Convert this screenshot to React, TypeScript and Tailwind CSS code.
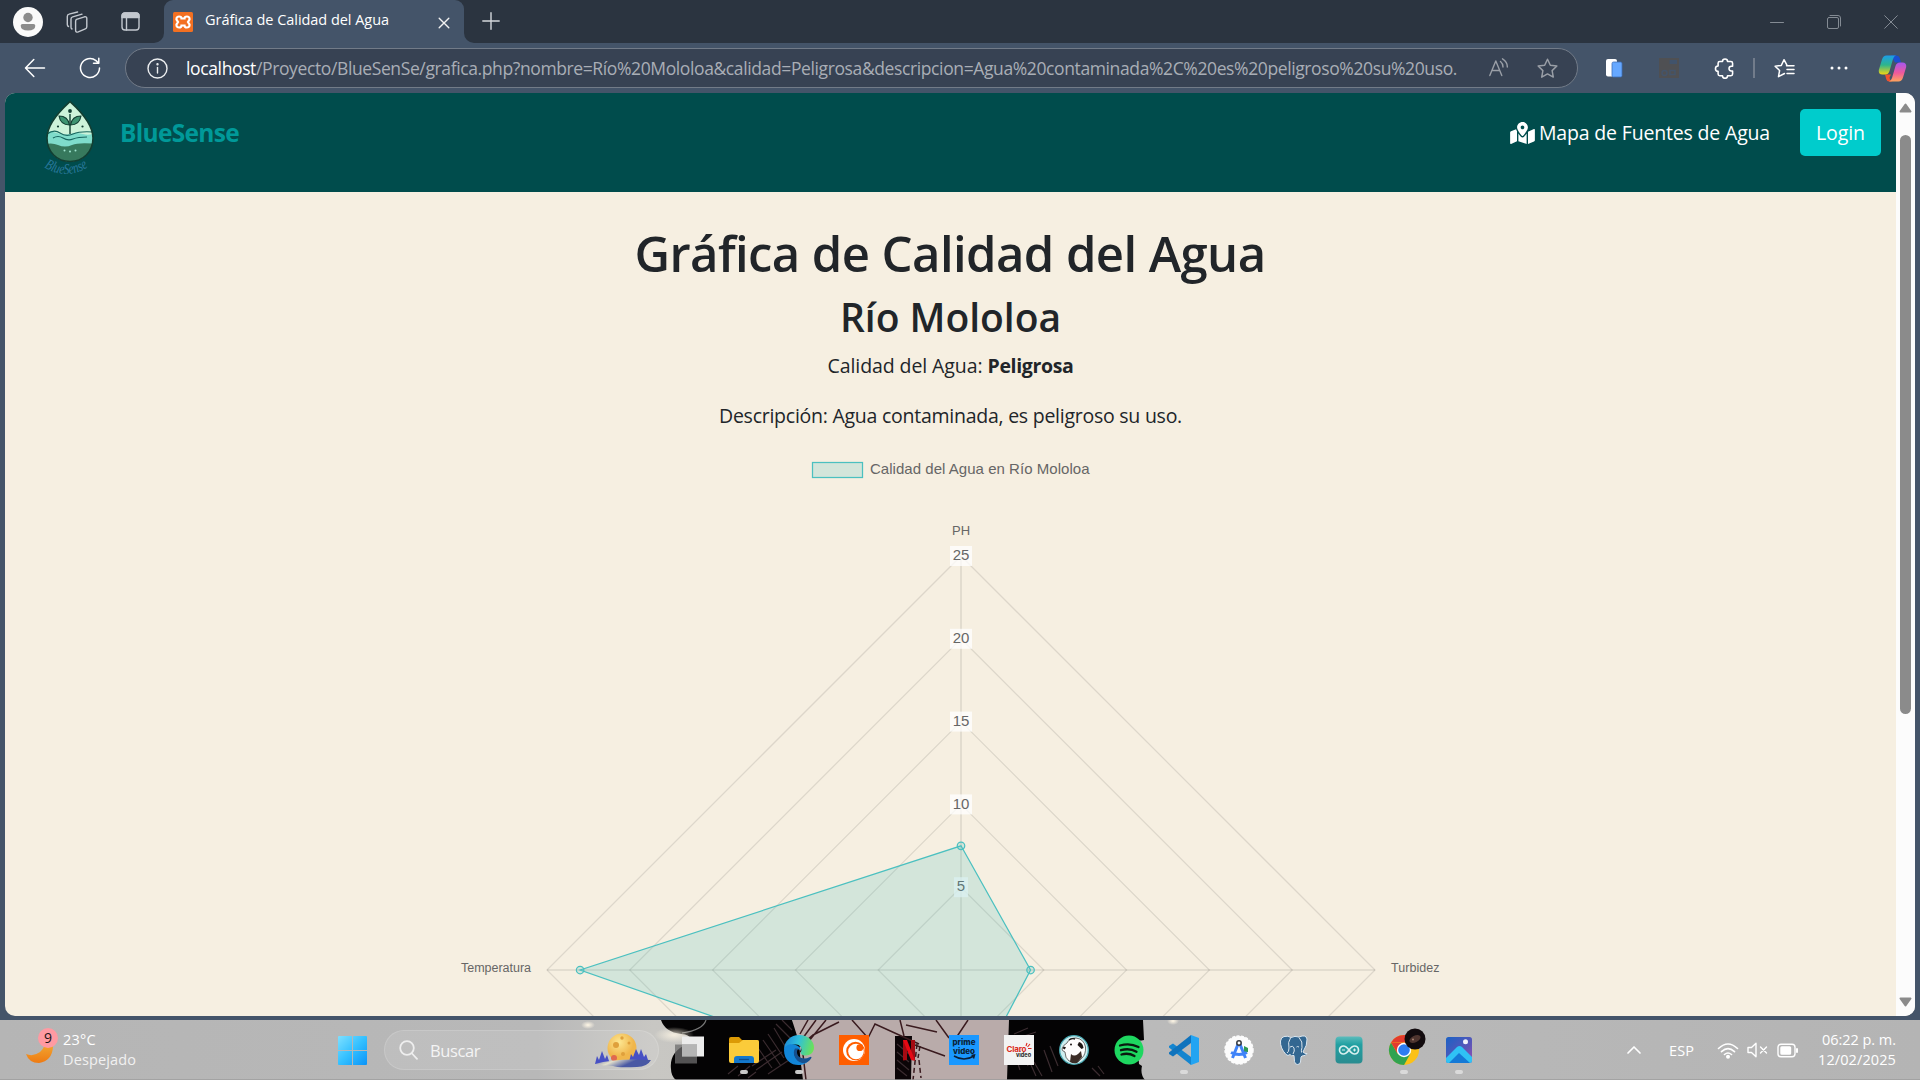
import { useLayoutEffect, useRef, useState, type ReactNode } from 'react';
import { FaMapMarkedAlt } from 'react-icons/fa';

/** Text whose tracking is adjusted so that it spans exactly `w` pixels. */
function Fit({ w, className = '', children }: { w: number; className?: string; children: string }) {
  const ref = useRef<HTMLSpanElement>(null);
  const [ls, setLs] = useState(0);
  useLayoutEffect(() => {
    const el = ref.current;
    if (el) setLs((w - el.getBoundingClientRect().width) / children.length);
  }, [w, children]);
  return (
    <span ref={ref} className={`inline-block whitespace-pre ${className}`} style={{ letterSpacing: `${ls}px` }}>
      {children}
    </span>
  );
}

const line = { fill: 'none', strokeLinecap: 'round', strokeLinejoin: 'round' } as const;

function TabStrip() {
  return (
    <div className="flex h-[43px] items-center bg-[#2b3440] text-[#c3c8cf]">
      <svg className="ml-[13px] size-[30px]" viewBox="0 0 30 30">
        <circle cx="15" cy="15" r="15" fill="#fafafa" />
        <circle cx="15" cy="10.500" r="4.700" fill="#8c8c8c" />
        <path d="M9.500 17h11q1.800 0 1.800 1.800 0 4.700-7.300 4.700t-7.300-4.700Q7.700 17 9.500 17z" fill="#8c8c8c" />
      </svg>
      <svg className="ml-[23px] size-[22px]" viewBox="0 0 22 22" stroke="currentColor" strokeWidth="1.4" {...line}>
        <path d="M10.500 8.300 18.500 5.800q2.300-.5 2.300 1.700v8.300q0 1.500-1.500 2.100l-7 3q-2.700.8-2.700-1.700v-8.800q0-1.600.9-2.100z" />
        <path d="M6 18q-1-.5-1-1.700V8q0-1.700 1.700-2.200l9.300-2.700" />
        <path d="M2.500 15.500q-1.200-.5-1.200-2V5.500q0-2 1.800-2.400l8.500-2.100" />
      </svg>
      <svg className="ml-[33px] size-[19px]" viewBox="0 0 19 19" stroke="currentColor" strokeWidth="1.4" {...line}>
        <rect x="1" y="1" width="17" height="17" rx="3" />
        <path d="M1 5.500V4a3 3 0 0 1 3-3h11a3 3 0 0 1 3 3v1.500z" fill="currentColor" />
        <path d="M5.500 6v12" />
      </svg>
      <div className="ml-[14px] h-full w-[10px] bg-[#445469]">
        <div className="h-full w-full rounded-br-[10px] bg-[#2b3440]" />
      </div>
      <div className="flex h-full w-[300px] items-center rounded-t-[9px] bg-[#445469]">
        <svg className="ml-[9px] size-5" viewBox="0 0 20 20">
          <rect width="20" height="20" rx="1.500" fill="#f37021" />
          <path
            d="M6 4.500c-2.500 0-3.200 2.500-2 4l1 1.500-1 1.500c-1.200 1.500-.5 4 2 4 1.500 0 2.500-1 2.500-2h3c0 1 1 2 2.500 2 2.500 0 3.200-2.500 2-4L15 10l1-1.500c1.200-1.500.5-4-2-4-1.500 0-2.500 1-2.500 2h-3c0-1-1-2-2.500-2z"
            fill="none"
            stroke="#fff"
            strokeWidth="2.200"
          />
        </svg>
        <div className="mb-[3px] ml-[12px] w-[184px] text-[14.5px] text-white">
          <Fit w={184}>Gráfica de Calidad del Agua</Fit>
        </div>
        <svg className="ml-[49px] mt-0.5 size-3" viewBox="0 0 12 12" stroke="#f2f2f2" strokeWidth="1.400" {...line}>
          <path d="M1.200 1.200l9.600 9.600M10.800 1.200l-9.600 9.600" />
        </svg>
      </div>
      <div className="h-full w-[10px] bg-[#445469]">
        <div className="h-full w-full rounded-bl-[10px] bg-[#2b3440]" />
      </div>
      <svg className="mb-px ml-[8px] size-[18px]" viewBox="0 0 18 18" stroke="#d5d8dc" strokeWidth="1.400" {...line}>
        <path d="M9 .8v16.400M.8 9h16.400" />
      </svg>
      <div className="ml-auto mr-[22px] flex items-center gap-[43px]">
        <svg className="size-[14px]" viewBox="0 0 14 14" stroke="#848b94" {...line}>
          <path d="M.5 7.500h13" />
        </svg>
        <svg className="size-[14px]" viewBox="0 0 14 14" stroke="#848b94" {...line}>
          <rect x=".5" y="2.500" width="11" height="11" rx="1.500" />
          <path d="M3 .5h8a2.500 2.500 0 0 1 2.500 2.500v8" />
        </svg>
        <svg className="size-[14px]" viewBox="0 0 14 14" stroke="#848b94" {...line}>
          <path d="M.7.700l12.600 12.600M13.300.700.7 13.300" />
        </svg>
      </div>
    </div>
  );
}

const STAR = 'M10 1.200l2.700 5.700 6.200.8-4.500 4.300 1.100 6.200L10 15.200l-5.500 3 1.100-6.200L1.100 7.700l6.200-.8z';

function Toolbar() {
  return (
    <div className="flex h-[50px] items-center bg-[#445469]">
      <svg className="ml-[24px] size-[22px]" viewBox="0 0 22 22" stroke="#fff" strokeWidth="1.500" {...line}>
        <path d="M20.500 11H1.800M9.800 2.500 1.500 11l8.300 8.500" />
      </svg>
      <svg className="ml-[33px] size-[22px]" viewBox="0 0 22 22" stroke="#fff" strokeWidth="1.500" {...line}>
        <path d="M20.500 11a9.500 9.500 0 1 1-3.500-7.400L19.500 6M19.800 1.200V6.300H14.500" />
      </svg>
      <div className="ml-[24px] flex h-10 w-[1453px] items-center rounded-full border border-[#727b88] bg-[#374253]">
        <svg className="ml-[21px] size-[21px]" viewBox="0 0 21 21" stroke="#eceef0" strokeWidth="1.400" {...line}>
          <circle cx="10.500" cy="10.500" r="9.500" />
          <path d="M10.500 9.500v5.500" />
          <circle cx="10.500" cy="6.300" r=".5" fill="#eee" />
        </svg>
        <div className="mb-px ml-[18px] flex w-[1270px] text-[17.5px] leading-[30px]">
          <Fit w={70} className="text-white">localhost</Fit>
          <Fit w={1201} className="text-[#a9aeb6]">
            /Proyecto/BlueSenSe/grafica.php?nombre=Río%20Mololoa&calidad=Peligrosa&descripcion=Agua%20contaminada%2C%20es%20peligroso%20su%20uso.
          </Fit>
        </div>
        <svg className="ml-[33px] size-5" viewBox="0 0 20 20" stroke="#9a9fa7" strokeWidth="1.400" {...line}>
          <path d="M.8 17.500 6.800 3l6 14.500M3 12.500h7.600" />
          <path d="M11.500 3.500q2.500 2 2.500 5.500M13.500.8q5 3 4.800 8.200" />
        </svg>
        <svg className="ml-[28px] size-[21px]" viewBox="0 0 20 20" stroke="#9a9fa7" strokeWidth="1.400" {...line}>
          <path d={STAR} />
        </svg>
      </div>
      <svg className="ml-[27px] h-5 w-[18px]" viewBox="0 0 18 20">
        <rect x="1" y="1" width="11" height="17.500" rx="2" fill="#fff" />
        <rect x="7" y="4" width="10" height="15" rx="1.500" fill="#66a8ff" stroke="#3d6eb8" strokeWidth=".8" />
      </svg>
      <svg className="ml-[36px] size-5" viewBox="0 0 20 20">
        <rect width="20" height="20" fill="#4f5053" />
        <path d="M10.500 2h7.500v4h-7.500z" fill="#41536b" />
        <path d="M3 15a2.500 2.500 0 1 1 5 0 2.500 2.500 0 1 1-5 0M11 12.500h5v4h-5z" fill="none" stroke="#44546a" strokeWidth="1.500" />
      </svg>
      <svg className="ml-[35px] size-[21px]" viewBox="0 0 20 20" stroke="#fff" strokeWidth="1.500" {...line}>
        <path d="M5.500 3.300h2.600a2.400 2.400 0 0 1 4.800 0h3.200q1.600 0 1.600 1.600v3h-1.200a2.200 2.200 0 1 0 0 4.400h1.200v3q0 1.600-1.600 1.600h-3.200a2.400 2.400 0 0 1-4.800 0H5.500q-1.600 0-1.600-1.600v-2.600a2.500 2.500 0 0 1 0-5V4.900q0-1.600 1.600-1.600z" />
      </svg>
      <div className="ml-[18px] h-5 w-0.5 bg-[#727c8b]" />
      <svg className="ml-[19px] size-[21px]" viewBox="0 0 21 20" stroke="#fff" strokeWidth="1.500" {...line}>
        <path d="M12.800 6.300 10 1.200 7.300 6.900l-6.200.8L5.600 12l-1.100 6.200 6-3.200M12.500 7.200H20M13 11h7M13 15h7" />
      </svg>
      <svg className="ml-[35px] h-1 w-[18px]" viewBox="0 0 18 4" fill="#fff">
        <circle cx="2" cy="2" r="1.500" />
        <circle cx="9" cy="2" r="1.500" />
        <circle cx="16" cy="2" r="1.500" />
      </svg>
      <svg className="ml-[30px] h-[27px] w-[29px]" viewBox="0 0 29 27">
        <defs>
          <linearGradient id="cpA" x1="0" y1="0" x2="0" y2="1">
            <stop offset="0" stopColor="#1c9de8" />
            <stop offset=".5" stopColor="#2db58c" />
            <stop offset="1" stopColor="#f3d513" />
          </linearGradient>
          <linearGradient id="cpB" x1="0" y1="0" x2="0" y2="1">
            <stop offset="0" stopColor="#a457f0" />
            <stop offset=".55" stopColor="#f0599b" />
            <stop offset="1" stopColor="#ffa55c" />
          </linearGradient>
        </defs>
        <path d="M13 .5h5.500q2.500 0 3.200 2.500l1.300 4.500h-6z" fill="#1a4fd0" />
        <path d="M7 19.500h6l-1.500 3q.5 4 3.500 4h-4q-2 0-2.800-2.500z" fill="#f1502f" />
        <path d="M8.500.5H18q-2 .3-3 3.500l-3.500 12q-1 3.500-4.500 3.500H4.500Q.3 19.500.8 15L4 4.500Q5.200.5 8.500.5z" fill="url(#cpA)" />
        <path d="M20.500 26.500H11q2-.3 3-3.500l3.500-12q1-3.500 4.500-3.500h2.500q4.200 0 3.700 4.500L25 22.500q-1.200 4-4.500 4z" fill="url(#cpB)" />
      </svg>
    </div>
  );
}

function DropLogo() {
  return (
    <svg className="h-[80px] w-[54px]" viewBox="0 0 54 80">
      <defs>
        <clipPath id="drop">
          <path d="M27 1.500C33 7 50 22 50 38c0 14-10 23.500-23 23.500S4 52 4 38C4 22 21 7 27 1.500z" />
        </clipPath>
        <path id="logoArc" d="M1 67q24 15 47-2" />
      </defs>
      <g clipPath="url(#drop)">
        <path d="M0 0h54v70H0z" fill="#cdf3da" />
        <path d="M0 33q7-3 14 0t13 1 13 0 14-2v34H0z" fill="#7fdccb" />
        <path d="M0 45q8-3 15 0t14 0 25-1v24H0z" fill="#37795d" />
        <path d="M4 34q7-5 13-1t13 1 20-2M10 38q5-3 10 0t10 1 14-2" fill="none" stroke="#17665f" strokeWidth="1.200" />
      </g>
      <path d="M27 1.500C33 7 50 22 50 38c0 14-10 23.500-23 23.500S4 52 4 38C4 22 21 7 27 1.500z" fill="none" stroke="#123e32" strokeWidth="1.600" />
      <path d="M27 14v20" stroke="#123e32" strokeWidth="1.400" />
      <path d="M26.500 25q-9 0-10.500-9 9 0 10.500 9zM27.500 25q9 0 10.500-9-9 0-10.500 9z" fill="#3f9472" stroke="#123e32" strokeWidth="1.100" />
      <g fill="#123e32">
        <circle cx="27" cy="11" r="1.900" />
        <circle cx="15" cy="26.500" r="1.100" />
        <circle cx="39.500" cy="26.500" r="1.100" />
      </g>
      <g fill="#9fe5cf">
        <circle cx="21.500" cy="50.500" r="1" />
        <circle cx="27" cy="51.500" r="1" />
        <circle cx="32.500" cy="50.500" r="1" />
      </g>
      <text fill="#28789b" fontSize="15" fontStyle="italic" fontFamily="Liberation Serif, serif">
        <textPath href="#logoArc" textLength="47" lengthAdjust="spacingAndGlyphs">BlueSense</textPath>
      </text>
    </svg>
  );
}

function SiteHeader() {
  return (
    <header className="flex h-[99px] items-start bg-[#004c4c]">
      <div className="ml-[38px] mt-[7px]"><DropLogo /></div>
      <div className="flex h-[79px] flex-1 items-center">
        <div className="ml-[23px] text-[24.500px] font-bold leading-[34px] text-[#009999]">
          <Fit w={119}>BlueSense</Fit>
        </div>
        <div className="ml-auto flex items-center text-[19.500px] leading-[30px] text-white">
          <FaMapMarkedAlt className="mr-[4px] h-[22px] w-[25px]" />
          <Fit w={231}>Mapa de Fuentes de Agua</Fit>
          <div className="ml-[30px] mr-[15px] flex h-[47px] w-[81px] items-center justify-center rounded-[5px] bg-[#00cccc]">
            <Fit w={49}>Login</Fit>
          </div>
        </div>
      </div>
    </header>
  );
}

const CX = 956;
const CY = 519;
const UNIT = 16.560;

function RadarChart() {
  const diamond = (v: number) => {
    const r = v * UNIT;
    return `${CX},${CY - r} ${CX + r},${CY} ${CX},${CY + r} ${CX - r},${CY}`;
  };
  const pts = [
    [CX, CY - 7.5 * UNIT],
    [CX + 4.2 * UNIT, CY],
    [CX, CY + 8.05 * UNIT],
    [CX - 23 * UNIT, CY],
  ];
  return (
    <svg className="h-[565px] w-[1891px] shrink-0 overflow-hidden font-['Liberation_Sans',sans-serif]" viewBox="0 0 1891 565">
      <rect x="807.500" y="11.500" width="50" height="15" fill="rgba(75,192,192,.2)" stroke="#4bc0c0" strokeWidth="1.250" />
      <text x="865" y="23" fontSize="15" fill="#666" textLength="219.500">Calidad del Agua en Río Mololoa</text>
      <g fill="none" stroke="rgba(0,0,0,.1)" strokeWidth="1.250">
        {[5, 10, 15, 20, 25].map((v) => <polygon key={v} points={diamond(v)} />)}
      </g>
      <path d={`M${CX} ${CY - 414}V565M${CX - 414} ${CY}H${CX + 414}`} stroke="rgba(0,0,0,.1)" strokeWidth="1.600" />
      {[25, 20, 15, 10, 5].map((v) => {
        const w = v > 5 ? 22 : 14;
        const y = CY - v * UNIT;
        return (
          <g key={v}>
            <rect x={CX - w / 2} y={y - 10} width={w} height="20" fill="rgba(255,255,255,.75)" />
            <text x={CX} y={Math.floor(y + 4.700)} fontSize="15" fill="#666" textAnchor="middle">{v}</text>
          </g>
        );
      })}
      <g fill="#666" fontSize="12.500">
        <text x={CX} y="84" fontSize="13" textAnchor="middle">PH</text>
        <text x="456" y="521" textLength="70">Temperatura</text>
        <text x="1386" y="521" textLength="48.500">Turbidez</text>
      </g>
      <polygon points={pts.map((p) => p.join(',')).join(' ')} fill="rgba(75,192,192,.2)" stroke="#4bc0c0" strokeWidth="1.250" />
      {pts.map(([x, y]) => (
        <circle key={`${x}-${y}`} cx={x} cy={y} r="3.750" fill="rgba(75,192,192,.2)" stroke="#4bc0c0" strokeWidth="1.250" />
      ))}
    </svg>
  );
}

function Page() {
  return (
    <div className="flex h-[923px] w-[1910px] overflow-hidden rounded-[10px] bg-[#f6efe1]">
      <div className="flex w-[1891px] flex-col">
        <SiteHeader />
        <main className="flex flex-col items-center pt-[31px] text-[#212529]">
          <h1 className="mb-[10px] mr-px text-[49px] font-semibold leading-[60px]"><Fit w={631}>Gráfica de Calidad del Agua</Fit></h1>
          <h2 className="mb-[10px] text-[39px] font-semibold leading-[48px]"><Fit w={221}>Río Mololoa</Fit></h2>
          <p className="mb-5 text-[19.500px] leading-[30px]">
            <Fit w={160}>Calidad del Agua: </Fit>
            <Fit w={86} className="font-bold">Peligrosa</Fit>
          </p>
          <p className="mb-5 text-[19.500px] leading-[30px]">
            <Fit w={463}>Descripción: Agua contaminada, es peligroso su uso.</Fit>
          </p>
          <RadarChart />
        </main>
      </div>
      <div className="flex w-[19px] flex-col items-center bg-[#fcfcfc]">
        <svg className="mt-[10px] h-[10px] w-[13px]" viewBox="0 0 13 10">
          <path d="M6.500 1.500 11.500 8.500h-10z" fill="#8b8b8b" stroke="#8b8b8b" strokeWidth="2" strokeLinejoin="round" />
        </svg>
        <div className="mt-[22px] h-[579px] w-[11px] rounded-full bg-[#8b8b8b]" />
        <svg className="mb-[9px] mt-auto h-[10px] w-[13px]" viewBox="0 0 13 10">
          <path d="M6.500 8.500 11.500 1.500h-10z" fill="#8b8b8b" stroke="#8b8b8b" strokeWidth="2" strokeLinejoin="round" />
        </svg>
      </div>
    </div>
  );
}

function Wallpaper() {
  return (
    <svg className="absolute inset-0 h-[60px] w-[1920px]" viewBox="0 0 1920 60">
      <defs>
        <linearGradient id="wall" x1="0" x2="1920" y1="0" y2="0" gradientUnits="userSpaceOnUse">
          <stop offset="0" stopColor="#b5b5b5" />
          <stop offset=".28" stopColor="#b8b8b8" />
          <stop offset=".34" stopColor="#c8c7c3" />
          <stop offset=".6" stopColor="#bababa" />
          <stop offset="1" stopColor="#b4b4b4" />
        </linearGradient>
        <radialGradient id="glow">
          <stop offset="0" stopColor="#fff7e6" />
          <stop offset="1" stopColor="#fff7e6" stopOpacity="0" />
        </radialGradient>
      </defs>
      <path d="M0 0h1920v60H0z" fill="url(#wall)" />
      <path d="M793 0h220v60H793z" fill="#b9abaa" />
      <path d="M661 0q4 12 20 14 14 1 6 10-18 8-16 25 0 7 5 11h127q-3-20-4-38l-7-22z" fill="#040304" />
      <path d="M1009 0h134l1 20q-6 1-5 0-1 12 0 24l3 2q-2 8 3 14H1007z" fill="#040304" />
      <path d="M895 16h17l-1 44h-16z" fill="#0b0507" />
      <g fill="none" stroke="#3a1b1f" strokeWidth="1.500">
        <path d="M839 2l-26 13-14 12M816 0l-16 22M826 0l-26 32M808 0l-8 14M852 0l16 18 7-14 44 20M875 4l-7 14M900 0l4 16M906 5l31 7M912 24l33 12M936 0l13 18M968 0l-12 18M802 26l4 34" />
        <path d="M917 24l-4 36M920 26l-2 12M919 40l2 18" strokeDasharray="5 3" />
      </g>
      <g fill="none" stroke="#3b2c30" strokeWidth="1.200">
        <path d="M768 14l16 24M763 20l18 26M774 8l18 30M758 28l14 20M784 24l10 20M752 46l24-16M756 50l26-18M768 54l24-16M776 4l16 16M782 0l10 10M728 54l10-8M738 56l12-10M748 58l8-6" />
        <path d="M897 24l12 10M897 32l12 10M897 40l12 10M897 48l10 8" />
        <path d="M1012 26l8 24M1018 20l10 26M1026 34l10 22M1034 42l8 14M1044 30l8 22M1050 26l8 20M1014 14l14-6M1024 16l12-4M1092 48l8 8M1098 46l6 8" />
      </g>
      <path d="M706 0q-3 10-24 13" fill="none" stroke="#777" strokeWidth="1.200" />
      <ellipse cx="588" cy="5" rx="7" ry="4" fill="url(#glow)" />
      <ellipse cx="674" cy="15" rx="20" ry="8" fill="url(#glow)" opacity=".8" />
      <ellipse cx="1173" cy="1" rx="6" ry="4" fill="url(#glow)" />
      <path d="M0 59.500h1920" stroke="#9b9b9b" opacity=".7" />
    </svg>
  );
}

type Task = { name: string; active?: boolean; icon: ReactNode };

const TASKS: Task[] = [
  {
    name: 'view',
    icon: (
      <>
        <rect x="8" y="1.500" width="22" height="20" fill="#ececec" />
        <rect x="1" y="9.500" width="22" height="19" fill="#6d6d6d" opacity=".75" />
        <rect x="8" y="9.500" width="15" height="12" fill="#b5b5b5" />
      </>
    ),
  },
  {
    name: 'explorer',
    active: true,
    icon: (
      <>
        <path d="M0 4q0-2 2-2h8l3 3h15q2 0 2 2v10H0z" fill="#dc9a05" />
        <path d="M0 8h10l4-3h14q2 0 2 2v19q0 2-2 2H2q-2 0-2-2z" fill="#fbcb3a" />
        <path d="M5 28v-4q0-3 3-3h14q3 0 3 3v4z" fill="#1478cc" />
        <path d="M10 24.500h10" stroke="#0d4c8c" strokeWidth="1.300" />
      </>
    ),
  },
  {
    name: 'edge',
    active: true,
    icon: (
      <>
        <defs>
          <linearGradient id="edgeTop" x1="0" y1=".3" x2="1" y2=".5">
            <stop offset="0" stopColor="#1c86d6" />
            <stop offset=".45" stopColor="#2fbfdc" />
            <stop offset="1" stopColor="#6be258" />
          </linearGradient>
        </defs>
        <path d="M0 15C0 6 7 0 15 0c9 0 15 6 15 12.500 0 5-4 8-8 8-4.500 0-6-2-5-3.500C18.500 14 17 9.500 12 9.500 6 9.500 1 12 0 15z" fill="url(#edgeTop)" />
        <path d="M0 15C1 10 6 8.500 11 9.700c4 1 6 3.800 5.500 5.800C13 12 9 16 11 21c2 5 8 7 15 3C20 34 0 32 0 15z" fill="#1285d8" />
        <path d="M11 13.500c-3 4 0 13 7 14.500 4 .5 8-2 9.500-5.500 0-1-1-.8-2-.2C20 25 13 23 13 17c0-2 1-3 1.500-3.500z" fill="#15508f" />
      </>
    ),
  },
  {
    name: 'crunchyroll',
    icon: (
      <>
        <path d="M0 0h30v30H0z" fill="#ff5e00" />
        <circle cx="15" cy="15" r="11" fill="#fff" />
        <circle cx="16.500" cy="16" r="9.300" fill="#ff5e00" />
        <circle cx="17" cy="16.500" r="7.800" fill="#fff" />
        <circle cx="20.800" cy="12.700" r="3.400" fill="#ff5e00" />
      </>
    ),
  },
  {
    name: 'netflix',
    icon: (
      <>
        <path d="M9 5h4v20l-4 .5zM17 5h4v20.500L17 25z" fill="#a50a12" />
        <path d="M9 5h4l8 20.500-4-.5z" fill="#e50914" />
      </>
    ),
  },
  {
    name: 'prime',
    icon: (
      <>
        <path d="M0 0h30v30H0z" fill="#1a98ff" />
        <g fill="#0b1f36" fontFamily="Inter, sans-serif" fontWeight="800" fontSize="8">
          <text x="3.500" y="10" textLength="23">prime</text>
          <text x="4" y="18.500" textLength="22">video</text>
        </g>
        <path d="M5 21q10 6 20 0M22.500 20.500l3-.5-1 3.500" fill="none" stroke="#0b1f36" strokeWidth="1.500" />
      </>
    ),
  },
  {
    name: 'claro',
    icon: (
      <>
        <path d="M0 0h30v30H0z" fill="#f3f3f3" />
        <g fontFamily="Inter, sans-serif" fontWeight="700">
          <text x="2.500" y="16.500" fontSize="8" fill="#dc2a22" textLength="20">Claro</text>
          <text x="12" y="22" fontSize="5.500" fill="#222" textLength="15">video</text>
        </g>
        <path d="M22 11l1-3M23.500 12l2.500-3M24 13.500h3.500" stroke="#dc2a22" strokeWidth="1.100" />
      </>
    ),
  },
  {
    name: 'dbeaver',
    icon: (
      <>
        <circle cx="15" cy="15" r="14.300" fill="#cfeef0" stroke="#49a9b3" strokeWidth="1.300" />
        <path d="M8 8q2-5 9-5 8 1 9.500 9 .5 7-3.500 11l-4 4-9-1q-4-3-4-9-3-1-3-3 1-4 5-6z" fill="#fdfdfd" stroke="#3a3330" strokeWidth=".7" />
        <path d="M20 7q4 1 4.500 6l-2 1-4-4z" fill="#1d1715" />
        <path d="M12 19q3 3 7 0l3-3 1 6-5 6q-4 1-7-1z" fill="#3b2d27" />
        <path d="M3.500 13q1.500-2 3.500-.5l-1.500 2z" fill="#1d1715" />
        <circle cx="12" cy="9.500" r="1" fill="#1d1715" />
        <path d="M10 5q3-2 6-1" stroke="#1d1715" strokeWidth="1.400" fill="none" />
      </>
    ),
  },
  {
    name: 'spotify',
    icon: (
      <>
        <circle cx="15" cy="15" r="14.500" fill="#1ed760" />
        <path d="M6 10.500q10-3 18.500 1.500M7 15.200q8.500-2.500 15.500 1.500M7.500 19.500q7-2 13 1.500" fill="none" stroke="#0a1a10" strokeWidth="2.300" strokeLinecap="round" />
      </>
    ),
  },
  {
    name: 'vscode',
    active: true,
    icon: (
      <>
        <path d="M22 30v-8L4 8.500 0 11v1.500z" fill="#1485cf" />
        <path d="M22 0v8L4 21.500l-4-2.500v-1.500z" fill="#0f73bd" />
        <path d="M22 0l8 3v24l-8 3z" fill="#23a4f2" />
      </>
    ),
  },
  {
    name: 'android-studio',
    icon: (
      <>
        <circle cx="15" cy="15" r="14" fill="#fcfcfc" stroke="#fcfcfc" strokeWidth="1.500" strokeDasharray="3 1.500" />
        <path d="M20 11l4 2v4l-4 1z" fill="#2f9a52" />
        <path d="M14.500 8 8.500 23M15.500 8l6 15M7 17.500q8 4 16 0" fill="none" stroke="#3f83f8" strokeWidth="3" />
        <circle cx="15" cy="8" r="2.200" fill="#fff" stroke="#34383e" strokeWidth="1.500" />
      </>
    ),
  },
  {
    name: 'postgres',
    icon: (
      <>
        <path
          d="M5 1.500q4-1 7 1 4-2 8-.5 7-3 8 2 .5 6-4 13 2 2 4 1.500-1 2.500-5 2.500l-1 1-.5 5q-.5 2.500-3 2.500t-3-3l-.5-6q-3 1-4-1-2 2-4 0Q1 13 1.500 6q.5-3.500 3.500-4.500z"
          fill="#336791"
          stroke="#dce6ee"
          strokeWidth="1"
        />
        <path d="M11.500 3q-3 4-1.500 10 0 4-2 5M20 2.500q4 4 3 10-1 3-.5 5M11 12q3-2 4 1 1 3-1 6M20 12q-2-1-2.500 0" fill="none" stroke="#dce6ee" strokeWidth="1" />
      </>
    ),
  },
  {
    name: 'arduino',
    icon: (
      <>
        <defs>
          <linearGradient id="ard" x1="0" y1="0" x2="0" y2="1">
            <stop offset="0" stopColor="#5cbcbc" />
            <stop offset=".3" stopColor="#22a0a2" />
            <stop offset="1" stopColor="#2a8c90" />
          </linearGradient>
        </defs>
        <rect x="1.500" y="1.500" width="27" height="27" rx="4" fill="url(#ard)" />
        <path d="M15 15q-3-4-5.500-4a4 4 0 1 0 0 8Q12 19 15 15q3-4 5.500-4a4 4 0 1 1 0 8Q18 19 15 15z" fill="none" stroke="#d9f0ef" strokeWidth="1.700" />
        <path d="M8 15h3M19 15h3M20.500 13.500v3" stroke="#d9f0ef" />
      </>
    ),
  },
  {
    name: 'chrome',
    active: true,
    icon: (
      <>
        <circle cx="15" cy="15" r="15" fill="#fbc116" />
        <path d="M2 7.500A15 15 0 0 1 28 7.500H15z" fill="#e33b2e" />
        <path d="M2 7.500A15 15 0 0 0 15 30l6.500-11.500H8.500z" fill="#31a350" />
        <path d="M2 7.500L8.500 18.500 15 8z" fill="#e33b2e" />
        <circle cx="15" cy="15" r="7.200" fill="#fff" />
        <circle cx="15" cy="15" r="5.800" fill="#2e7cf0" />
        <circle cx="26" cy="4" r="10.500" fill="#120b0e" />
        <ellipse cx="26" cy="4" rx="6" ry="3.300" fill="#4f352f" transform="rotate(-25 26 4)" />
        <circle cx="24" cy="4.500" r="1" fill="#a98372" />
      </>
    ),
  },
  {
    name: 'photos',
    active: true,
    icon: (
      <>
        <defs>
          <linearGradient id="photoBg" x1="0" y1="0" x2="1" y2="1">
            <stop offset="0" stopColor="#1a62c5" />
            <stop offset=".6" stopColor="#5a56b8" />
            <stop offset="1" stopColor="#9a4fb0" />
          </linearGradient>
        </defs>
        <rect x="2" y="2" width="26" height="26" rx="2.500" fill="url(#photoBg)" />
        <path d="M2 23 13 12q2.500-2 5 0l10 10v4q0 2-2 2H4q-2 0-2-2z" fill="#2fc2f5" />
        <path d="M5 28 15 18l11 10z" fill="#1479d6" />
        <circle cx="21.500" cy="6.800" r="2.500" fill="#f1f3fb" />
      </>
    ),
  },
];

function Taskbar() {
  return (
    <div className="relative h-[60px] overflow-hidden text-[14.500px] leading-5 text-white">
      <Wallpaper />
      <div className="relative flex h-full items-center">
        <div className="relative ml-[25px] h-[40px] w-[35px]">
          <svg className="h-[40px] w-[35px]" viewBox="0 0 35 40">
            <defs>
              <linearGradient id="moon" x1="0" y1="0" x2="0" y2="1">
                <stop offset="0" stopColor="#f3b53c" />
                <stop offset="1" stopColor="#ee7a12" />
              </linearGradient>
            </defs>
            <path d="M24 8q4 4 4 9-1 14-14 16Q4 33 1 24q7 3 14-2 6-5 5-13z" fill="url(#moon)" />
          </svg>
          <span className="absolute left-[13px] top-[-2px] flex size-5 items-center justify-center rounded-full bg-[#ff9aa2] text-sm text-[#1d1416]">
            9
          </span>
        </div>
        <div className="ml-[3px] flex w-[75px] flex-col">
          <Fit w={33} className="self-start">23°C</Fit>
          <Fit w={73} className="self-start text-[#f1f1f1]">Despejado</Fit>
        </div>
        <svg className="ml-[200px] size-[29px]" viewBox="0 0 29 29">
          <defs>
            <linearGradient id="win" x1="0" y1="0" x2="1" y2="1">
              <stop offset="0" stopColor="#7fe0ff" />
              <stop offset=".5" stopColor="#34c0ff" />
              <stop offset="1" stopColor="#0a93f8" />
            </linearGradient>
          </defs>
          <path d="M1 0h13v14H0V1q0-1 1-1zM15 0h13q1 0 1 1v13H15zM0 15h14v14H1q-1 0-1-1zM15 15h14v13q0 1-1 1H15z" fill="url(#win)" />
        </svg>
        <div className="ml-[17px] flex h-10 w-[275px] items-center rounded-full border border-white/15 bg-white/10">
          <svg className="ml-[14px] size-[20px]" viewBox="0 0 20 20" stroke="#eeeeee" strokeWidth="1.800" {...line}>
            <circle cx="8" cy="8" r="6.800" />
            <path d="M13 13.500l5 5.300" />
          </svg>
          <Fit w={50} className="ml-[11px] mt-px text-[16.500px] leading-6 text-[#f4f4f4]">Buscar</Fit>
          <svg className="ml-auto mr-[6px] h-[35px] w-[58px]" viewBox="0 0 58 35">
            <defs>
              <radialGradient id="fullMoon" cx=".4" cy=".3">
                <stop offset="0" stopColor="#fde792" />
                <stop offset="1" stopColor="#f0b64c" />
              </radialGradient>
              <linearGradient id="lake" x1="0" x2="1" y1="0" y2=".3">
                <stop offset="0" stopColor="#6a73ab" />
                <stop offset=".35" stopColor="#e3e0cc" />
                <stop offset=".7" stopColor="#4a59a4" />
                <stop offset="1" stopColor="#4a59a4" />
              </linearGradient>
            </defs>
            <circle cx="28" cy="15" r="14.500" fill="url(#fullMoon)" />
            <g fill="#dfa03c">
              <circle cx="22" cy="12" r="3" />
              <circle cx="28" cy="5" r="1.700" />
              <circle cx="35" cy="10" r="1.500" />
              <circle cx="29" cy="21" r="2" />
            </g>
            <circle cx="20" cy="25" r="3" fill="#e0684e" />
            <path d="M1 31l2-8 2 4 3-9 3 8 2-4 3 9zM35 29l2-8 2 3 3-8 3 6 2-6 3 8 2-3 3 9z" fill="#4750c4" />
            <path d="M1 31q20-6 56-4-4 7-14 7-20 1-24-1-8 0-18-2z" fill="url(#lake)" />
          </svg>
        </div>
        <div className="ml-[2.500px] flex h-full">
          {TASKS.map((t) => (
            <div key={t.name} className="flex h-full w-[55px] flex-col items-center pt-[15px]">
              <svg className="size-[30px] overflow-visible" viewBox="0 0 30 30">{t.icon}</svg>
              {t.active && <div className="mt-[5px] h-1 w-2 rounded-full bg-[#dedede]/90" />}
            </div>
          ))}
        </div>
        <div className="ml-auto mr-6 flex items-center">
          <svg className="h-[10px] w-[16px]" viewBox="0 0 16 10" stroke="#fff" strokeWidth="1.700" {...line}>
            <path d="M2 8l6-6 6 6" />
          </svg>
          <Fit w={25} className="ml-[27px] mt-px">ESP</Fit>
          <svg className="ml-[23px] h-[17px] w-[22px]" viewBox="0 0 22 17" stroke="#fff" strokeWidth="1.600" {...line}>
            <path d="M1.500 6.500q9.500-9 19 0M4.500 9.700q6.500-6 13 0M7.500 12.500q3.500-3 7 0" />
            <circle cx="11" cy="14.800" r="1.200" fill="#fff" />
          </svg>
          <svg className="ml-[8px] h-[16px] w-[21px]" viewBox="0 0 21 16" stroke="#fff" strokeWidth="1.400" {...line}>
            <path d="M1 5.500h3.500L9 1.300v13.400L4.500 10.500H1zM13.500 5l6 6M19.500 5l-6 6" />
          </svg>
          <svg className="ml-[9px] h-[15px] w-[22px]" viewBox="0 0 22 15" stroke="#fff" strokeWidth="1.400" {...line}>
            <rect x="1" y="1.200" width="17" height="12.500" rx="3" />
            <rect x="4" y="4" width="9.500" height="7" rx=".8" fill="#fff" />
            <path d="M20 6v3" strokeWidth="2" />
          </svg>
          <div className="ml-[19px] flex flex-col items-end">
            <Fit w={74}>06:22 p. m.</Fit>
            <Fit w={78}>12/02/2025</Fit>
          </div>
        </div>
      </div>
    </div>
  );
}

export default function App() {
  return (
    <div className="h-[1080px] w-[1920px] overflow-hidden bg-[#445469] font-['Open_Sans','Noto_Sans',sans-serif]">
      <TabStrip />
      <Toolbar />
      <div className="px-[5px] pb-1">
        <Page />
      </div>
      <Taskbar />
    </div>
  );
}
